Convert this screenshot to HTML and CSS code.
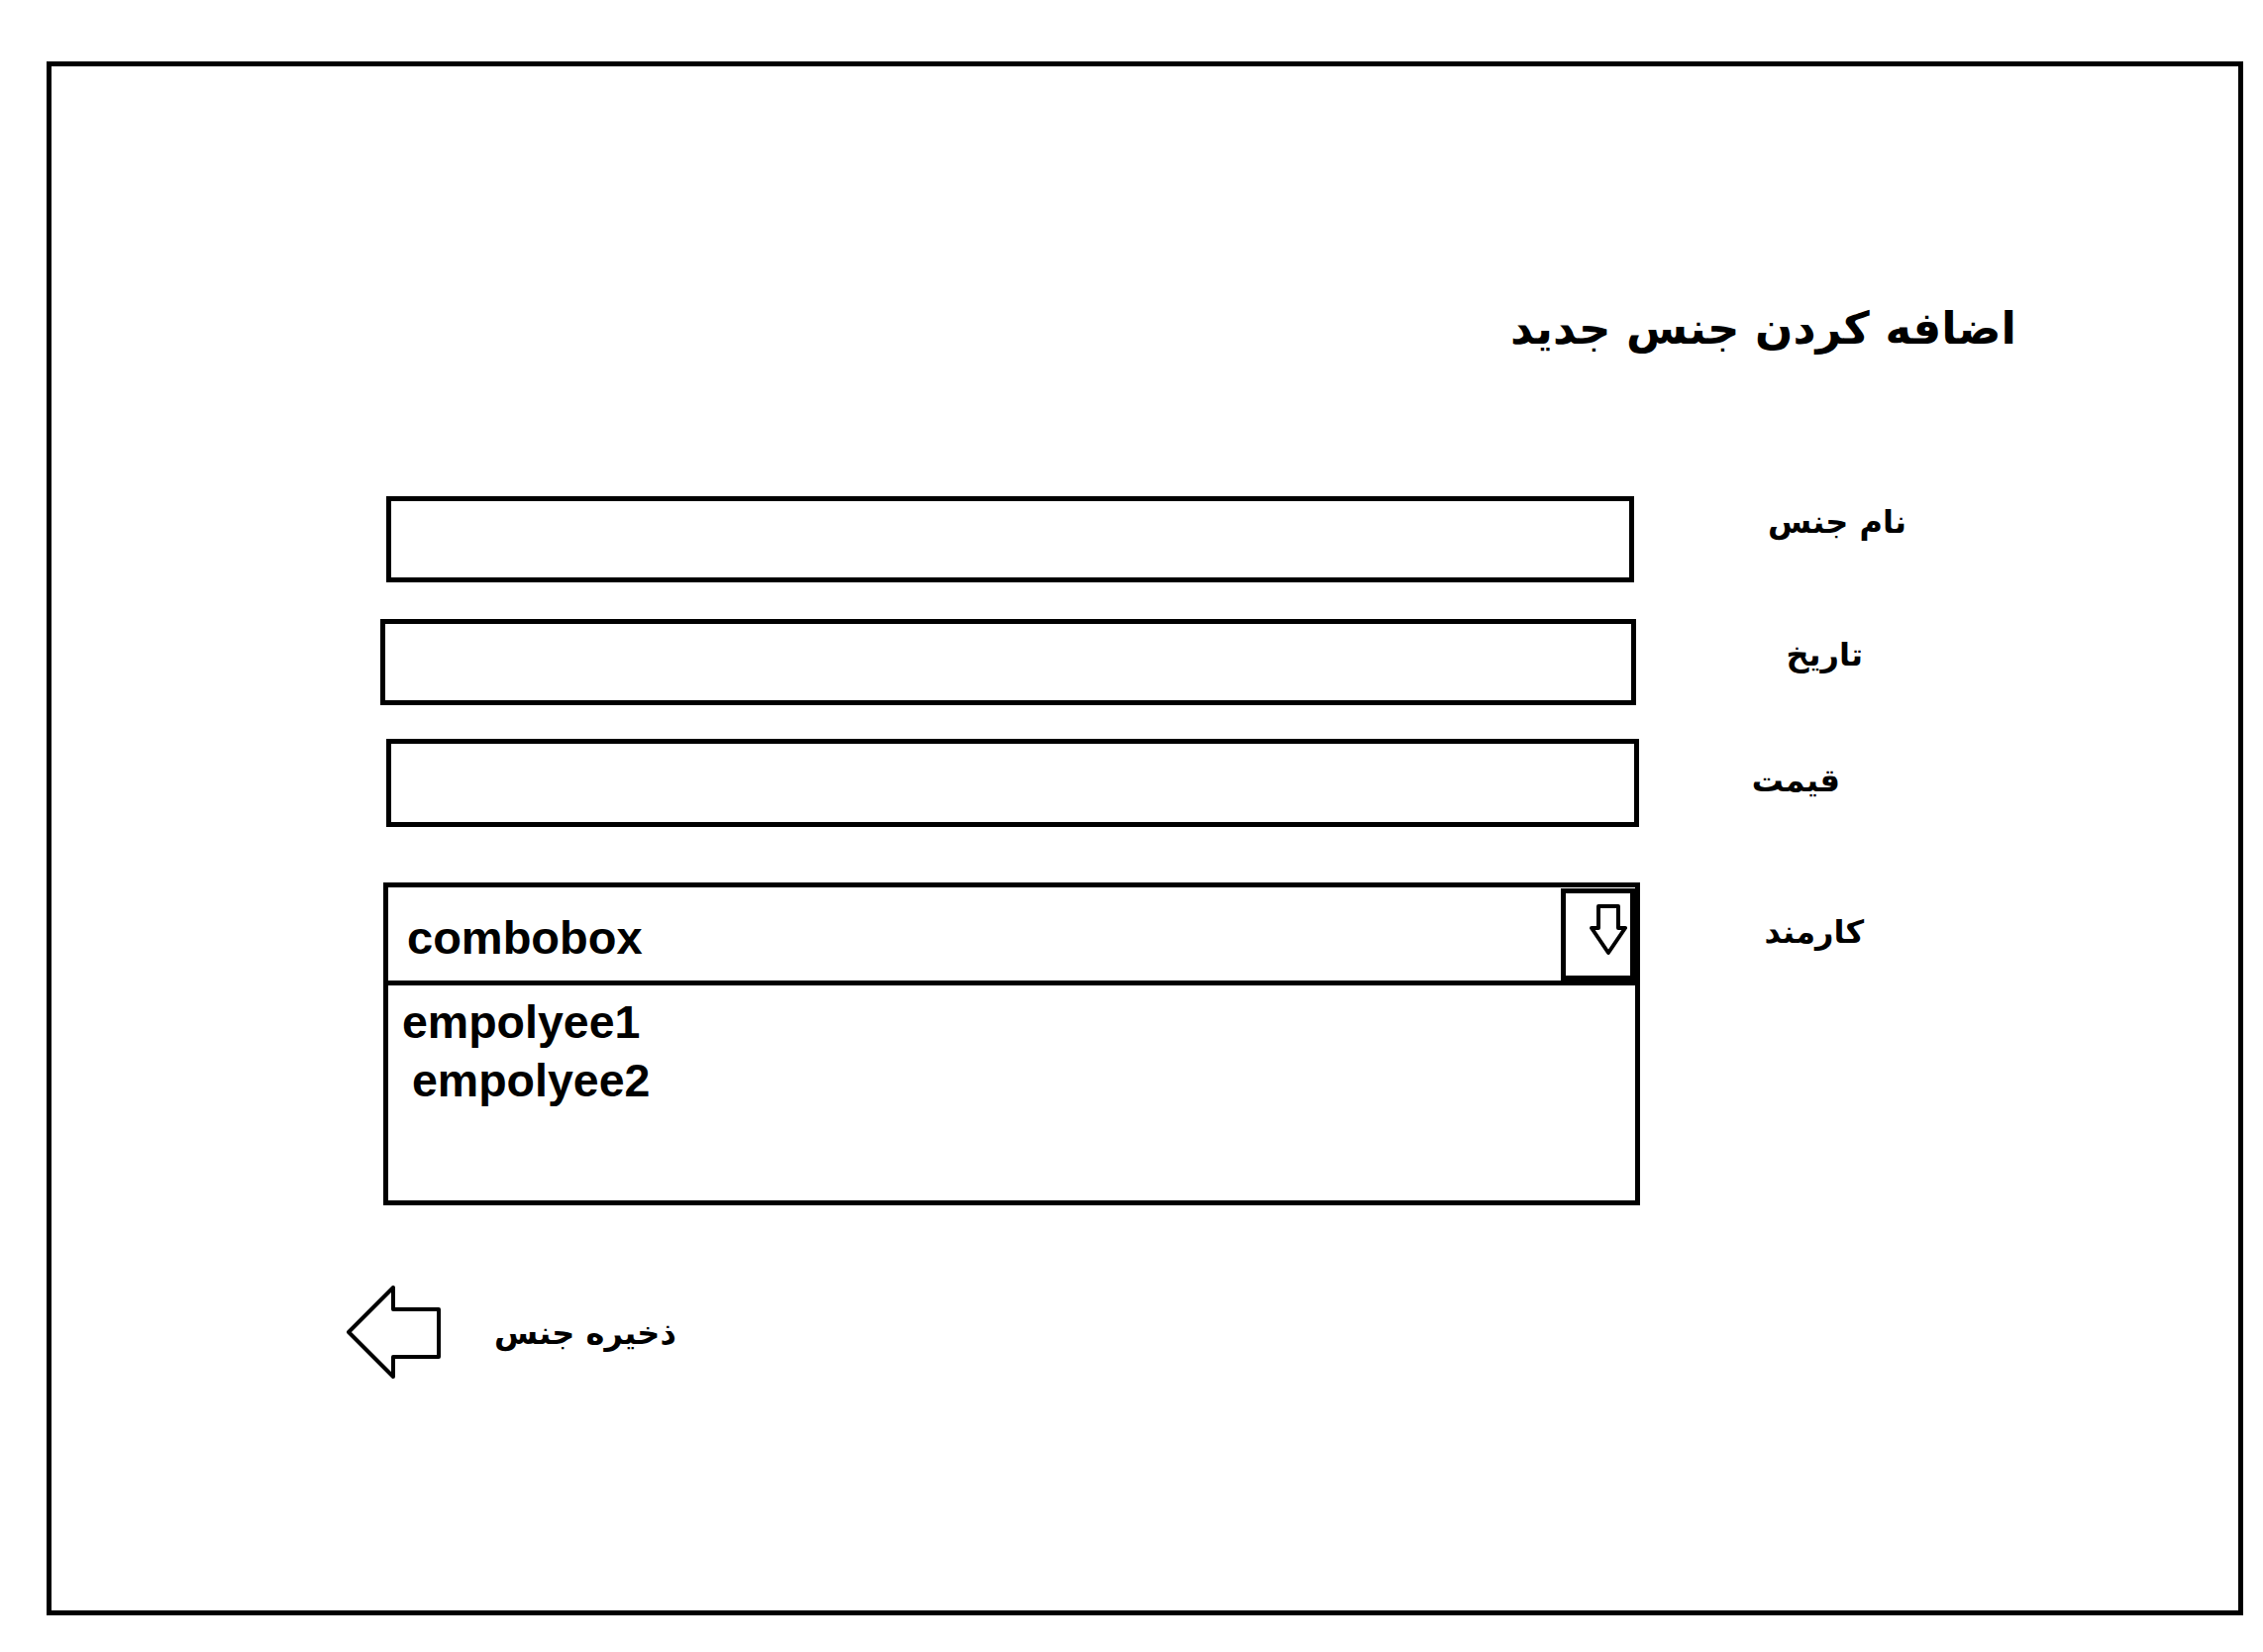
FILE: index.html
```html
<!DOCTYPE html>
<html lang="fa">
<head>
<meta charset="utf-8">
<title>اضافه کردن جنس جدید</title>
<link rel="stylesheet" href="styles.css">
</head>
<body>
<div class="frame">
  <h1 class="title" dir="rtl">اضافه کردن جنس جدید</h1>
  <div class="form">
    <div class="row row-name">
      <div class="field"></div>
      <div class="label-col"><span class="label" dir="rtl">نام جنس</span></div>
    </div>
    <div class="row row-date">
      <div class="field"></div>
      <div class="label-col"><span class="label" dir="rtl">تاریخ</span></div>
    </div>
    <div class="row row-price">
      <div class="field"></div>
      <div class="label-col"><span class="label" dir="rtl">قیمت</span></div>
    </div>
    <div class="row row-employee">
      <div class="combo">
        <div class="combo-head">
          <span class="combo-value">combobox</span>
          <div class="combo-btn">
            <svg class="down-arrow" width="38" height="52" viewBox="0 0 38 52"><polygon points="9,2 9,24 2,24 19,49 36,24 29,24 29,2" fill="none" stroke="#000" stroke-width="4" stroke-linejoin="round"/></svg>
          </div>
        </div>
        <div class="combo-list">
          <div class="option">empolyee1</div>
          <div class="option option-indent">empolyee2</div>
        </div>
      </div>
      <div class="label-col"><span class="label" dir="rtl">کارمند</span></div>
    </div>
  </div>
  <div class="save">
    <svg class="save-arrow" width="96" height="96" viewBox="0 0 96 96"><polygon points="2,47 47,2 47,24 93,24 93,72 47,72 47,92" fill="none" stroke="#000" stroke-width="4" stroke-linejoin="round"/></svg>
    <span class="save-text" dir="rtl">ذخیره جنس</span>
  </div>
</div>
</body>
</html>
```
FILE: styles.css
```css
html, body {
  margin: 0;
  padding: 0;
  background: #fff;
}
body {
  font-family: "Liberation Sans", "DejaVu Sans", sans-serif;
  color: #000;
}
.frame {
  box-sizing: border-box;
  width: 2218px;
  height: 1569px;
  margin: 62px 0 0 47px;
  border: 5px solid #000;
  display: flex;
  flex-direction: column;
}
.title {
  margin: 235px 0 0 0;
  padding-right: 224px;
  text-align: right;
  font-family: "DejaVu Sans", sans-serif;
  font-weight: bold;
  font-size: 45px;
  line-height: 60px;
}
.form {
  margin: 139px 0 0 337px;
  display: flex;
  flex-direction: column;
}
.row {
  display: flex;
  align-items: flex-start;
}
.field {
  box-sizing: border-box;
  border: 5px solid #000;
  height: 87px;
  flex: none;
}
.row-name .field { margin-left: 1px; width: 1260px; }
.row-date { margin-top: 37px; }
.row-date .field { margin-left: -5px; width: 1268px; }
.row-price { margin-top: 34px; }
.row-price .field { margin-left: 1px; width: 1265px; height: 89px; }
.row-employee { margin-top: 56px; }

.label-col {
  flex: none;
  box-sizing: border-box;
  text-align: right;
}
.label {
  font-family: "DejaVu Sans", sans-serif;
  font-weight: bold;
  font-size: 32px;
  line-height: 50px;
  white-space: nowrap;
}
.row-name .label-col { width: 275px; margin-top: 1px; }
.row-date .label-col { width: 229px; margin-top: 11px; }
.row-price .label-col { width: 203px; margin-top: 17px; }
.row-employee .label-col { width: 226px; margin-top: 25px; }

.combo {
  box-sizing: border-box;
  margin-left: -2px;
  width: 1269px;
  height: 326px;
  border: 5px solid #000;
  display: flex;
  flex-direction: column;
  flex: none;
}
.combo-head {
  height: 94px;
  border-bottom: 5px solid #000;
  display: flex;
  justify-content: space-between;
  align-items: flex-start;
}
.combo-value {
  margin: 24px 0 0 19px;
  font-weight: bold;
  font-size: 47px;
  line-height: 54px;
}
.combo-btn {
  box-sizing: border-box;
  margin-top: 1px;
  width: 75px;
  height: 93px;
  border: 5px solid #000;
  display: flex;
  justify-content: flex-start;
  align-items: flex-start;
}
.down-arrow {
  margin-top: 11px;
  margin-left: 24px;
}
.combo-list {
  padding: 8px 0 0 14px;
}
.option {
  font-weight: bold;
  font-size: 46.5px;
  line-height: 59px;
}
.option-indent {
  padding-left: 10px;
}
.save {
  margin: 81px 0 0 298px;
  display: flex;
  align-items: center;
}
.save-arrow {
  flex: none;
}
.save-text {
  margin-left: 53px;
  font-family: "DejaVu Sans", sans-serif;
  font-weight: bold;
  font-size: 32px;
  line-height: 50px;
}
```
